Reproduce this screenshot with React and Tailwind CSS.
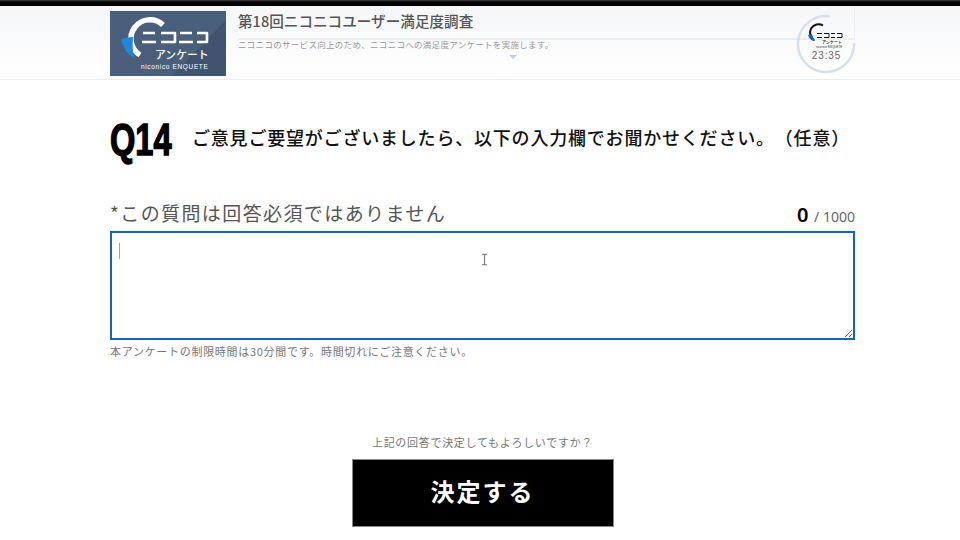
const JP = "font-['Noto_Sans_CJK_JP','Noto_Sans',sans-serif]";
const JP_SVG = "'Noto Sans CJK JP', sans-serif";
const LIB_SVG = "'Liberation Sans', sans-serif";

function Logo() {
  return (
    <svg viewBox="0 0 116 65" className="block w-[116px] h-[65px] shrink-0 mt-[5px]">
      <rect width="116" height="65" fill="#4a5f7c" />
      <polygon points="62,65 116,9 116,65" fill="#40546f" />
      <path d="M53 14 A19 19 0 1 0 30 44" fill="none" stroke="#fff" strokeWidth="5.500" />
      <path d="M11 28 Q17 26 23 26 Q22 38 24 47 Q14 42 11 28Z" fill="#1f86d8" />
      <g fill="none" stroke="#fff" strokeWidth="2.600" strokeLinejoin="round">
        <path d="M33 22 H45 M32 31 H46" />
        <path d="M51 22 H65 V31 H51" />
        <path d="M70 22 H82 M69 31 H83" />
        <path d="M87 22 H97 V31 H87" />
      </g>
      <text x="45" y="48" fontSize="10.800" fontWeight="500" fill="#fff" fontFamily={JP_SVG}>アンケート</text>
      <text x="31" y="58" fontSize="6.500" letterSpacing="0.650" fill="#fff" fontFamily={LIB_SVG}>niconico ENQUETE</text>
    </svg>
  );
}

function Timer() {
  return (
    <div className="absolute right-[-1px] top-[8px] w-[60px] h-[60px] flex flex-col items-center">
      <svg viewBox="0 0 60 60" className="block w-[60px] h-[60px]">
        <path d="M34 2.300 A28 28 0 1 0 58 29" fill="none" stroke="#d6e0e8" strokeWidth="2.500" />
        <path d="M27 11.500 A8 8 0 1 0 18 26" fill="none" stroke="#111" strokeWidth="2" />
        <path d="M12 21 L16 20 Q17 24 19 27 Q14 27 12 21Z" fill="#1565c0" />
        <g fill="none" stroke="#111" strokeWidth="1">
          <path d="M21 19.500 H26 M21 23.500 H26 M28 19.500 H33 V23.500 H28 M35 19.500 H39 M35 23.500 H39 M41 19.500 H46 V23.500 H41" />
        </g>
        <text x="26" y="29.500" fontSize="4" fontWeight="500" fill="#222" fontFamily={JP_SVG}>アンケート</text>
        <text x="20" y="33.500" fontSize="3" fill="#333" fontFamily={LIB_SVG}>niconico ENQUETE</text>
        <text x="30.500" y="44.500" fontSize="10" letterSpacing="0.900" textAnchor="middle" fill="#666" fontFamily={LIB_SVG}>23:35</text>
      </svg>
    </div>
  );
}

function Header() {
  return (
    <header className="h-[74px] border-b border-[#e8edf1] bg-gradient-to-b from-[#f5f6f8] to-white">
      <div className="relative w-[745px] h-full flex gap-3 ml-[110px]">
        <Logo />
        <div className="flex-1 flex flex-col">
          <div className="h-[34px] shrink-0 border-b-2 border-r border-[#ebeef0] pt-[3px]">
            <h1 className={`text-[14.600px] leading-[24px] font-medium text-[#555] whitespace-nowrap ${JP}`}>第18回ニコニコユーザー満足度調査</h1>
          </div>
          <p className={`-mt-[2px] text-[8.500px] leading-[12px] tracking-[0.3px] text-[#999] whitespace-nowrap ${JP}`}>ニコニコのサービス向上のため、ニコニコへの満足度アンケートを実施します。</p>
          <span className="mt-[5px] ml-[271px] w-0 h-0 border-x-[4px] border-x-transparent border-t-[4px] border-t-[#c3ced8]" />
        </div>
        <Timer />
      </div>
    </header>
  );
}

export default function App() {
  return (
    <div className={`w-[960px] h-[540px] overflow-hidden bg-white ${JP}`}>
      <div className="h-[6px] bg-gradient-to-b from-[#444] via-black to-black" />
      <Header />
      <main className="w-[745px] ml-[110px]">
        <div className="flex items-center mt-[36px] h-[48px]">
          <span className="w-[82px] shrink-0 text-[44px] leading-[48px] font-bold text-black origin-left scale-x-[0.74] [-webkit-text-stroke:1.500px_black] font-['Liberation_Sans',sans-serif]">Q14</span>
          <h2 className="-mt-[6px] text-[18px] leading-[28px] font-medium text-[#111] tracking-[0.8px] whitespace-nowrap [text-spacing-trim:space-all]">ご意見ご要望がございましたら、以下の入力欄でお聞かせください。（任意）</h2>
        </div>
        <div className="flex items-end justify-between mt-[33px] h-[32px]">
          <p className="mb-[3px] text-[19px] leading-[26px] text-[#555] tracking-[1.400px] whitespace-nowrap">*この質問は回答必須ではありません</p>
          <p className="whitespace-nowrap leading-[24px] font-['Noto_Sans',sans-serif]">
            <span className="mr-[2px] text-[20px] font-semibold text-black">0</span>
            <span className="text-[14px] text-[#666]"> / 1000</span>
          </p>
        </div>
        <div className="relative mt-[2px] h-[109px]">
          <textarea readOnly aria-label="回答" className="block w-full h-full bg-white border-2 border-[#1565b5] resize-y outline-none" />
          <span className="absolute left-[9px] top-[12px] w-px h-[16px] bg-[#9aa4b8]" />
          <svg viewBox="0 0 8 14" className="absolute left-[371px] top-[22px] w-[7px] h-[13px]">
            <path d="M1 1 H3 Q4 1 4 2 V12 Q4 13 3 13 H1 M7 1 H5 Q4 1 4 2 M4 12 Q4 13 5 13 H7" fill="none" stroke="#777" strokeWidth="1.300" />
          </svg>
        </div>
        <p className="mt-[3px] text-[11px] leading-[16px] tracking-[0.7px] text-[#777] whitespace-nowrap">本アンケートの制限時間は30分間です。時間切れにご注意ください。</p>
        <div className="mt-[75px] flex flex-col items-center gap-[9px]">
          <p className="text-[11px] leading-[16px] tracking-[0.7px] text-[#777] whitespace-nowrap">上記の回答で決定してもよろしいですか？</p>
          <button className="w-[262px] h-[68px] pb-[4px] bg-black border border-[#888] text-white text-[24px] font-bold tracking-[2px]">決定する</button>
        </div>
      </main>
    </div>
  );
}
